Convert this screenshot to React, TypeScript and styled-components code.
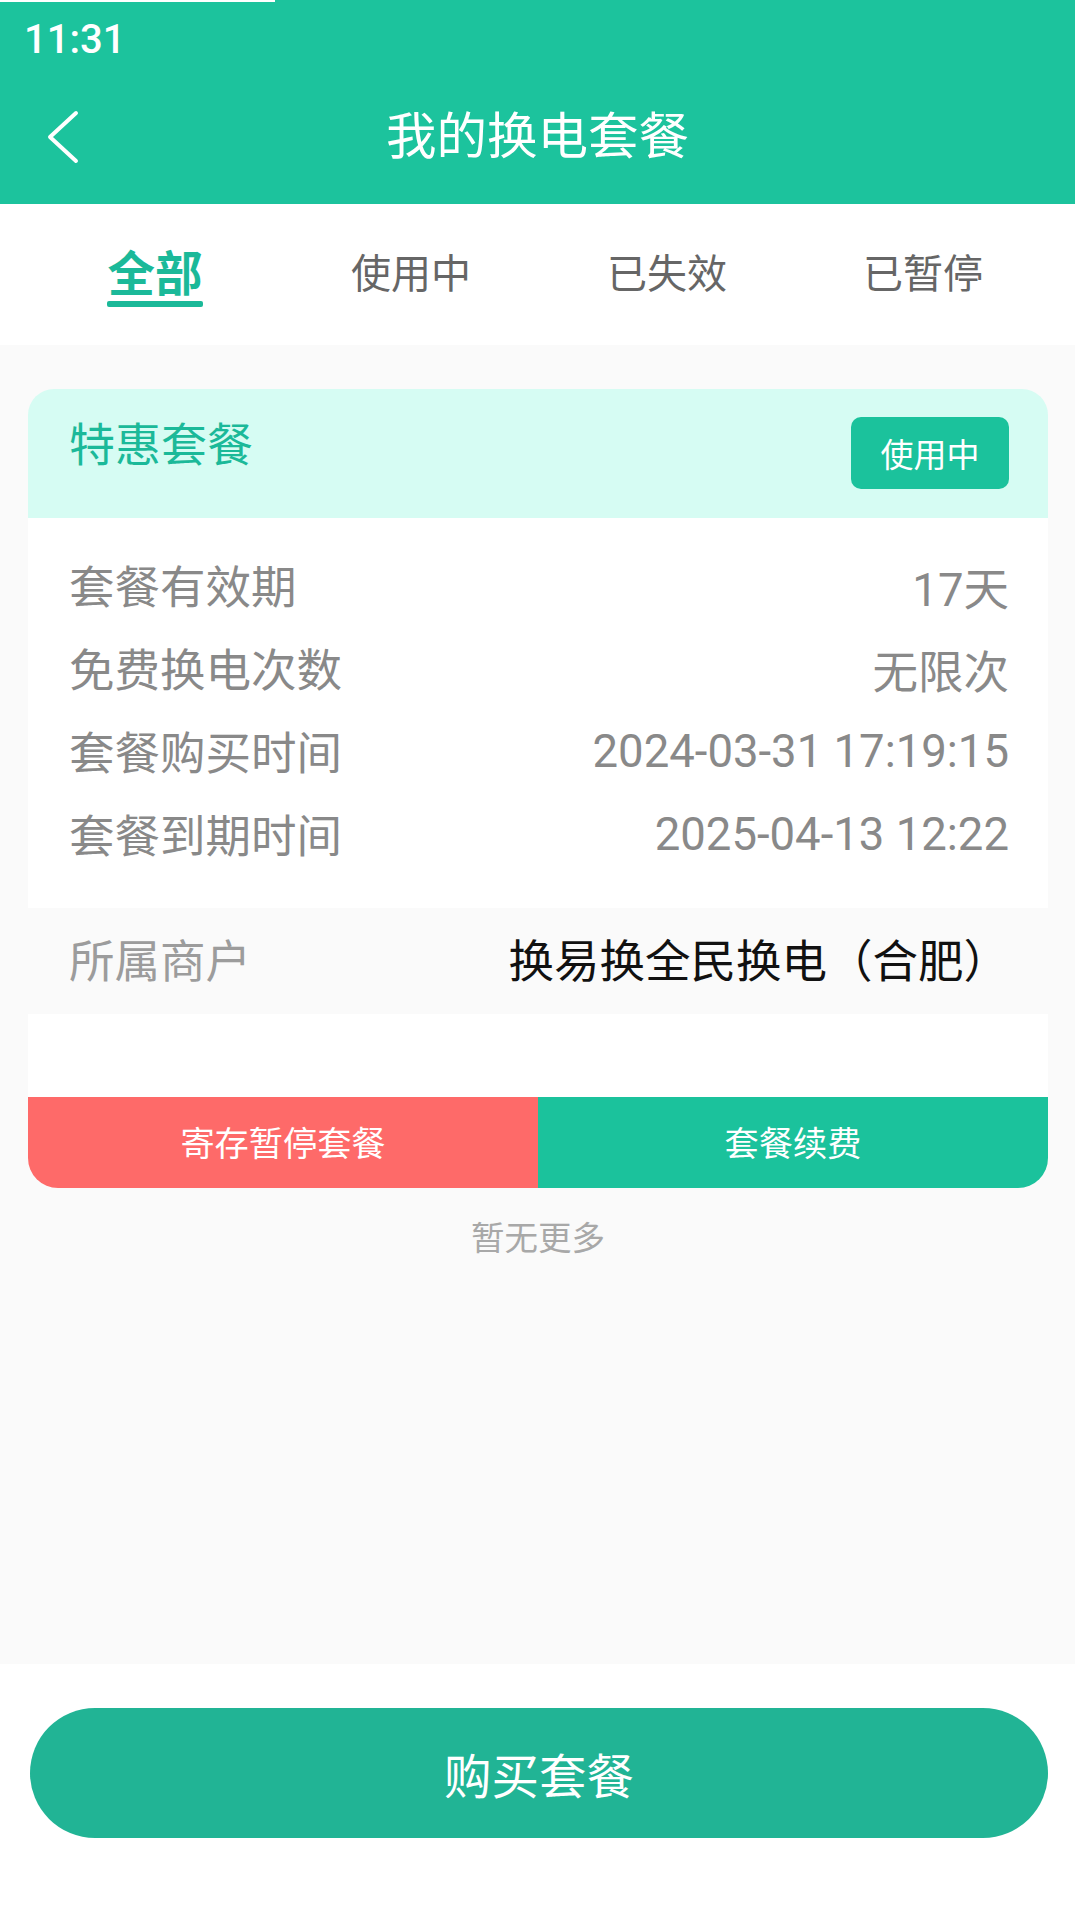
import React from "react";
import styled, { createGlobalStyle } from "styled-components";

const GlobalStyle = createGlobalStyle`
  html, body { margin: 0; padding: 0; background: #ffffff; }
  body { font-family: Roboto, "Noto Sans CJK SC", "Noto Sans", sans-serif; }
  * { box-sizing: border-box; }
`;

const Page = styled.div`
  width: 1075px;
  min-height: 1912px;
  display: flex;
  flex-direction: column;
  background: #ffffff;
`;

const Header = styled.header`
  background: #1cc39d;
  display: flex;
  flex-direction: column;
  height: 204px;
`;

const TopLine = styled.div`
  width: 275px;
  height: 2px;
  background: #ffffff;
`;

const StatusBar = styled.div`
  height: 76px;
  display: flex;
  align-items: center;
  padding-left: 24px;
  color: #ffffff;
  font-family: Roboto, sans-serif;
  font-weight: 500;
  font-size: 40px;
  line-height: 1;
`;

const NavBar = styled.div`
  flex: 1;
  display: flex;
  align-items: center;
  justify-content: center;
  position: relative;
  padding-bottom: 19px;
`;

const BackButton = styled.button`
  position: absolute;
  left: 44px;
  top: 31px;
  border: none;
  background: transparent;
  padding: 0;
  width: 40px;
  height: 56px;
  display: flex;
  align-items: center;
  justify-content: center;
`;

const Title = styled.h1`
  margin: 0;
  color: #ffffff;
  font-family: "Noto Sans CJK SC", sans-serif;
  font-weight: 400;
  font-size: 50.5px;
  line-height: 60px;
`;

const Tabs = styled.nav`
  height: 141px;
  display: flex;
  padding: 0 24px 0 27px;
  background: #ffffff;
`;

const Tab = styled.div<{ $active?: boolean }>`
  flex: 1;
  display: flex;
  flex-direction: column;
  align-items: center;
  padding-top: 40px;
  font-family: "Noto Sans CJK SC", sans-serif;
  font-size: ${(p) => (p.$active ? "47.5px" : "40px")};
  font-weight: ${(p) => (p.$active ? 700 : 400)};
  color: ${(p) => (p.$active ? "#1bb999" : "#666666")};
  line-height: 54px;
`;

const TabBar = styled.span<{ $active?: boolean }>`
  margin-top: 3px;
  width: 96px;
  height: 6px;
  border-radius: 2px;
  background: ${(p) => (p.$active ? "#1bb999" : "transparent")};
`;

const Content = styled.main`
  background: #fafafa;
  min-height: 1319px;
  padding: 44px 27px 0 28px;
  display: flex;
  flex-direction: column;
`;

const Card = styled.section`
  display: flex;
  flex-direction: column;
  border-radius: 26px 26px 30px 30px;
  overflow: hidden;
`;

const CardHeader = styled.div`
  height: 129px;
  background: #d6fcf3;
  display: flex;
  justify-content: space-between;
  align-items: flex-start;
  padding: 27px 39px 0 41px;
`;

const CardTitle = styled.div`
  color: #1bb999;
  font-family: "Noto Sans CJK SC", sans-serif;
  font-size: 46px;
  line-height: 50px;
`;

const Badge = styled.span`
  width: 158px;
  height: 72px;
  margin-top: 1px;
  border-radius: 10px;
  background: #1bc29c;
  color: #ffffff;
  display: flex;
  align-items: center;
  justify-content: center;
  font-family: "Noto Sans CJK SC", sans-serif;
  font-size: 33px;
`;

const CardBody = styled.div`
  background: #ffffff;
  padding: 24px 39px 34px 41px;
  display: flex;
  flex-direction: column;
`;

const InfoRow = styled.div`
  height: 83px;
  display: flex;
  justify-content: space-between;
  align-items: center;
  font-family: "Noto Sans CJK SC", sans-serif;
  font-size: 45.5px;
  color: #898989;
`;

const InfoValue = styled.span`
  font-family: Roboto, "Noto Sans CJK SC", sans-serif;
  position: relative;
  top: 2px;
`;

const MerchantRow = styled.div`
  height: 106px;
  background: #fafafa;
  display: flex;
  justify-content: space-between;
  align-items: center;
  padding: 0 39px 6px 41px;
  font-family: "Noto Sans CJK SC", sans-serif;
  font-size: 45.5px;
`;

const MerchantLabel = styled.span`
  color: #9c9c9c;
`;

const MerchantValue = styled.span`
  color: #111111;
`;

const Spacer = styled.div`
  height: 83px;
  background: #ffffff;
`;

const ActionRow = styled.div`
  height: 91px;
  display: flex;
`;

const ActionButton = styled.button<{ $tone: "red" | "green" }>`
  flex: 1;
  border: none;
  background: ${(p) => (p.$tone === "red" ? "#fe6a69" : "#1bc29c")};
  color: #ffffff;
  font-family: "Noto Sans CJK SC", sans-serif;
  font-size: 34.2px;
  display: flex;
  align-items: center;
  justify-content: center;
  padding: 0 0 4px;
`;

const NoMore = styled.div`
  margin-top: 28px;
  text-align: center;
  color: #a8a8a8;
  font-family: "Noto Sans CJK SC", sans-serif;
  font-size: 33.5px;
  line-height: 40px;
`;

const Footer = styled.footer`
  flex: 1;
  background: #ffffff;
  padding: 44px 27px 0 30px;
`;

const BuyButton = styled.button`
  width: 100%;
  height: 130px;
  border: none;
  border-radius: 65px;
  background: #21b495;
  color: #ffffff;
  font-family: "Noto Sans CJK SC", sans-serif;
  font-size: 47.5px;
  display: flex;
  align-items: center;
  justify-content: center;
`;

const rows: [string, string][] = [
  ["套餐有效期", "17天"],
  ["免费换电次数", "无限次"],
  ["套餐购买时间", "2024-03-31 17:19:15"],
  ["套餐到期时间", "2025-04-13 12:22"],
];

const tabs = ["全部", "使用中", "已失效", "已暂停"];

export default function App() {
  return (
    <Page>
      <GlobalStyle />
      <Header>
        <TopLine />
        <StatusBar>11:31</StatusBar>
        <NavBar>
          <BackButton aria-label="返回">
            <svg width="40" height="56" viewBox="0 0 40 56" fill="none">
              <polyline
                points="32,4 6,28 32,52"
                stroke="#ffffff"
                strokeWidth="4"
                strokeLinecap="round"
                strokeLinejoin="round"
              />
            </svg>
          </BackButton>
          <Title>我的换电套餐</Title>
        </NavBar>
      </Header>
      <Tabs>
        {tabs.map((t, i) => (
          <Tab key={t} $active={i === 0}>
            {t}
            <TabBar $active={i === 0} />
          </Tab>
        ))}
      </Tabs>
      <Content>
        <Card>
          <CardHeader>
            <CardTitle>特惠套餐</CardTitle>
            <Badge>使用中</Badge>
          </CardHeader>
          <CardBody>
            {rows.map(([k, v]) => (
              <InfoRow key={k}>
                <span>{k}</span>
                <InfoValue>{v}</InfoValue>
              </InfoRow>
            ))}
          </CardBody>
          <MerchantRow>
            <MerchantLabel>所属商户</MerchantLabel>
            <MerchantValue>换易换全民换电（合肥）</MerchantValue>
          </MerchantRow>
          <Spacer />
          <ActionRow>
            <ActionButton $tone="red">寄存暂停套餐</ActionButton>
            <ActionButton $tone="green">套餐续费</ActionButton>
          </ActionRow>
        </Card>
        <NoMore>暂无更多</NoMore>
      </Content>
      <Footer>
        <BuyButton>购买套餐</BuyButton>
      </Footer>
    </Page>
  );
}
